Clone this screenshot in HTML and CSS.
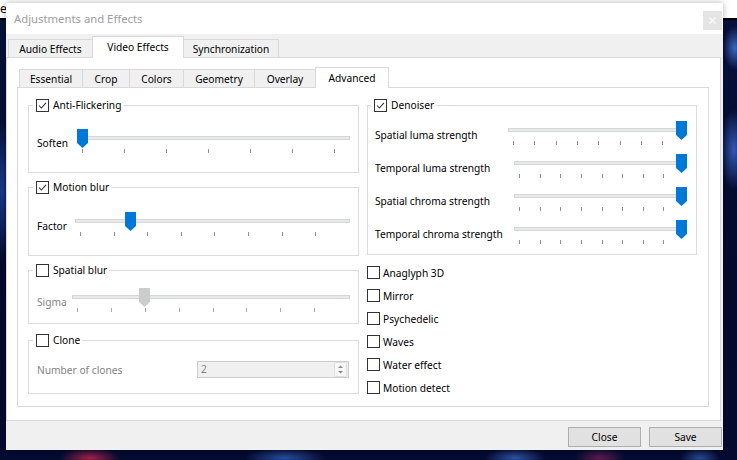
FILE: index.html
```html
<!DOCTYPE html>
<html>
<head>
<meta charset="utf-8">
<title>Adjustments and Effects</title>
<link rel="stylesheet" href="styles.css">
</head>
<body>
<div class="desktop">
  <div class="bg-window"><span class="bg-title">ec</span></div>
  <div class="dialog">
    <div class="titlebar">
      <span class="title">Adjustments and Effects</span>
      <span class="close-x"><svg width="7" height="7" viewBox="0 0 7 7"><path d="M0.5 0.5L6.5 6.5M6.5 0.5L0.5 6.5" stroke="#fafafa" stroke-width="1.2"/></svg></span>
    </div>
    <div class="body">
      <div class="tabbar outer-tabs">
        <div class="tab w-audio">Audio Effects</div>
        <div class="tab w-video selected">Video Effects</div>
        <div class="tab w-sync">Synchronization</div>
      </div>
      <div class="outer-pane">
        <div class="tabbar sub-tabs">
          <div class="subtab w-essential">Essential</div>
          <div class="subtab w-crop">Crop</div>
          <div class="subtab w-colors">Colors</div>
          <div class="subtab w-geometry">Geometry</div>
          <div class="subtab w-overlay">Overlay</div>
          <div class="subtab w-advanced selected">Advanced</div>
        </div>
        <div class="subpane">
          <div class="col left-col">
            <fieldset class="group g-anti">
              <legend><span class="legend-inner"><span class="cb"><svg width="11" height="11" viewBox="0 0 11 11"><path d="M2 5.5L4.3 8L9 2.8" fill="none" stroke="#333" stroke-width="1.1"/></svg></span>Anti-Flickering</span></legend>
              <div class="slider-row">
                <span class="lbl lbl-soften">Soften</span>
                <div class="slider">
                  <div class="groove"></div>
                  <div class="ticks t-anti"><i></i><i></i><i></i><i></i><i></i><i></i><i></i></div>
                  <span class="handle" style="left:0px"><svg width="11" height="19" viewBox="0 0 11 19"><polygon points="0,0 11,0 11,14 5.5,19 0,14"/></svg></span>
                </div>
              </div>
            </fieldset>

            <fieldset class="group g-motion">
              <legend><span class="legend-inner"><span class="cb"><svg width="11" height="11" viewBox="0 0 11 11"><path d="M2 5.5L4.3 8L9 2.8" fill="none" stroke="#333" stroke-width="1.1"/></svg></span>Motion blur</span></legend>
              <div class="slider-row">
                <span class="lbl lbl-factor">Factor</span>
                <div class="slider">
                  <div class="groove"></div>
                  <div class="ticks t-motion"><i></i><i></i><i></i><i></i><i></i><i></i><i></i><i></i></div>
                  <span class="handle" style="left:50px"><svg width="11" height="19" viewBox="0 0 11 19"><polygon points="0,0 11,0 11,14 5.5,19 0,14"/></svg></span>
                </div>
              </div>
            </fieldset>

            <fieldset class="group g-spatial">
              <legend><span class="legend-inner"><span class="cb"></span>Spatial blur</span></legend>
              <div class="slider-row disabled">
                <span class="lbl lbl-sigma">Sigma</span>
                <div class="slider">
                  <div class="groove"></div>
                  <div class="ticks t-spatial"><i></i><i></i><i></i><i></i><i></i><i></i><i></i><i></i></div>
                  <span class="handle" style="left:67px"><svg width="11" height="19" viewBox="0 0 11 19"><polygon points="0,0 11,0 11,14 5.5,19 0,14"/></svg></span>
                </div>
              </div>
            </fieldset>

            <fieldset class="group g-clone">
              <legend><span class="legend-inner"><span class="cb"></span>Clone</span></legend>
              <div class="spin-row">
                <span class="lbl-dis">Number of clones</span>
                <div class="spinbox">
                  <span class="spin-value">2</span>
                  <svg class="spin-arrows" width="13" height="15" viewBox="0 0 13 15"><rect x="0.5" y="0.5" width="12" height="14" rx="1" fill="#f7f7f7" stroke="#dedede"/><polygon points="4,6 9,6 6.5,3.5" fill="#8a8a8a"/><polygon points="4,9 9,9 6.5,11.5" fill="#8a8a8a"/></svg>
                </div>
              </div>
            </fieldset>
          </div>

          <div class="col right-col">
            <fieldset class="group g-denoise">
              <legend><span class="legend-inner"><span class="cb"><svg width="11" height="11" viewBox="0 0 11 11"><path d="M2 5.5L4.3 8L9 2.8" fill="none" stroke="#333" stroke-width="1.1"/></svg></span>Denoiser</span></legend>
              <div class="denoise-grid">
                <span class="lbl">Spatial luma strength</span>
                <div class="slider first">
                  <div class="groove"></div>
                  <div class="ticks t-den1"><i></i><i></i><i></i><i></i><i></i><i></i><i></i><i></i></div>
                  <span class="handle" style="left:168px"><svg width="11" height="19" viewBox="0 0 11 19"><polygon points="0,0 11,0 11,14 5.5,19 0,14"/></svg></span>
                </div>
                <span class="lbl">Temporal luma strength</span>
                <div class="slider">
                  <div class="groove"></div>
                  <div class="ticks t-den"><i></i><i></i><i></i><i></i><i></i><i></i><i></i><i></i></div>
                  <span class="handle" style="left:162px"><svg width="11" height="19" viewBox="0 0 11 19"><polygon points="0,0 11,0 11,14 5.5,19 0,14"/></svg></span>
                </div>
                <span class="lbl">Spatial chroma strength</span>
                <div class="slider">
                  <div class="groove"></div>
                  <div class="ticks t-den"><i></i><i></i><i></i><i></i><i></i><i></i><i></i><i></i></div>
                  <span class="handle" style="left:162px"><svg width="11" height="19" viewBox="0 0 11 19"><polygon points="0,0 11,0 11,14 5.5,19 0,14"/></svg></span>
                </div>
                <span class="lbl">Temporal chroma strength</span>
                <div class="slider">
                  <div class="groove"></div>
                  <div class="ticks t-den"><i></i><i></i><i></i><i></i><i></i><i></i><i></i><i></i></div>
                  <span class="handle" style="left:162px"><svg width="11" height="19" viewBox="0 0 11 19"><polygon points="0,0 11,0 11,14 5.5,19 0,14"/></svg></span>
                </div>
              </div>
            </fieldset>

            <div class="checks">
              <div class="check-row"><span class="cb"></span>Anaglyph 3D</div>
              <div class="check-row"><span class="cb"></span>Mirror</div>
              <div class="check-row"><span class="cb"></span>Psychedelic</div>
              <div class="check-row"><span class="cb"></span>Waves</div>
              <div class="check-row"><span class="cb"></span>Water effect</div>
              <div class="check-row"><span class="cb"></span>Motion detect</div>
            </div>
          </div>
        </div>
      </div>
      <div class="footer">
        <button class="btn">Close</button>
        <button class="btn">Save</button>
      </div>
    </div>
  </div>
</div>
</body>
</html>
```

FILE: styles.css
```css
* { box-sizing: border-box; }

html, body {
  margin: 0;
  padding: 0;
  background: #030826;
}

body {
  font-family: "Noto Sans", "Open Sans", sans-serif;
  font-size: 10.2px;
  color: #000;
}

.desktop {
  position: relative;
  width: 737px;
  height: 460px;
  overflow: hidden;
  background:
    radial-gradient(ellipse 14px 40px at 734px 150px, rgba(70,120,235,.7), transparent),
    radial-gradient(ellipse 12px 22px at 735px 48px, rgba(80,140,245,.7), transparent),
    radial-gradient(ellipse 10px 70px at 2px 190px, rgba(40,90,210,.6), transparent),
    radial-gradient(ellipse 30px 10px at 90px 458px, rgba(210,40,80,.75), transparent),
    radial-gradient(ellipse 40px 10px at 285px 458px, rgba(60,120,225,.6), transparent),
    radial-gradient(ellipse 30px 10px at 515px 458px, rgba(70,130,235,.6), transparent),
    radial-gradient(ellipse 25px 10px at 600px 458px, rgba(160,40,100,.55), transparent),
    radial-gradient(ellipse 20px 10px at 700px 458px, rgba(70,130,235,.5), transparent),
    linear-gradient(#07113d, #040a2c 60%, #050b30);
}

.bg-window {
  height: 20px;
  background: #ffffff;
  border-bottom: 2px solid #000;
}

.bg-title {
  display: block;
  margin-left: 0;
  font-size: 12px;
  line-height: 18px;
  color: #000;
}

.dialog {
  position: absolute;
  left: 6px;
  top: 3px;
  width: 717px;
  height: 447px;
  background: #f0f0f0;
  display: flex;
  flex-direction: column;
  box-shadow: 0 0 6px rgba(0,0,0,.3);
}

.titlebar {
  height: 31px;
  flex: none;
  background: #fff;
  display: flex;
  align-items: flex-start;
}

.title {
  margin: 8px 0 0 8px;
  font-size: 11.3px;
  line-height: 16px;
  color: #9d9d9d;
}

.close-x {
  margin: 8px 1px 0 auto;
  width: 19px;
  height: 19px;
  background: #e5e5e5;
  display: flex;
  align-items: center;
  justify-content: center;
}

.body {
  flex: 1;
  display: flex;
  flex-direction: column;
  padding: 2px 0 0 0;
}

.tabbar {
  display: flex;
  align-items: flex-end;
  flex: none;
}

.outer-tabs {
  height: 21px;
  padding-left: 2px;
}

.tab, .subtab {
  height: 18px;
  border: 1px solid #d9d9d9;
  border-bottom: none;
  background: #f0f0f0;
  display: flex;
  align-items: center;
  justify-content: center;
  line-height: 16px;
  margin-right: -1px;
  white-space: nowrap;
}

.tab.selected {
  height: 22px;
  margin-bottom: -1px;
  background: #fff;
  position: relative;
  z-index: 1;
  padding-bottom: 2px;
}

.w-audio { width: 85px; }
.w-video { width: 92px; }
.w-sync { width: 96px; }

.outer-pane {
  background: #fff;
  border: 1px solid #d9d9d9;
  margin-right: 2px;
  padding: 9px 11px 13px 10px;
}

.sub-tabs {
  height: 20px;
  padding-left: 2px;
}

.subtab.selected {
  height: 21px;
  margin-bottom: -1px;
  background: #fff;
  position: relative;
  z-index: 1;
  padding-bottom: 1px;
}

.w-essential { width: 64px; }
.w-crop { width: 48px; }
.w-colors { width: 55px; }
.w-geometry { width: 72px; }
.w-overlay { width: 62px; }
.w-advanced { width: 74px; }

.subpane {
  height: 320px;
  border: 1px solid #d9d9d9;
  padding: 9px 11px 0 10px;
  display: flex;
  gap: 8px;
}

.col {
  display: flex;
  flex-direction: column;
}

.left-col { width: 331px; }
.right-col { width: 330px; }

.group {
  margin: 0;
  border: 1px solid #dcdcdc;
  padding: 0 8px 15px 8px;
  min-width: 0;
}

.group legend {
  margin-left: -4px;
  padding: 0 2px 0 3px;
  height: 16px;
}

.legend-inner {
  display: flex;
  align-items: center;
  gap: 4px;
  height: 16px;
  line-height: 16px;
}

.cb {
  flex: none;
  width: 13px;
  height: 13px;
  border: 1px solid #333;
  background: #fff;
  display: flex;
  align-items: center;
  justify-content: center;
}

.g-anti { padding-top: 16px; }
.g-motion { margin-top: 6px; padding-top: 17px; }
.g-spatial { margin-top: 6px; padding-top: 10px; padding-bottom: 7px; }
.g-clone { margin-top: 8px; padding-top: 13px; padding-right: 9px; }

.slider-row {
  display: flex;
  align-items: center;
}

.lbl { line-height: 16px; white-space: nowrap; }
.lbl-soften { width: 40px; }
.lbl-factor { width: 38px; }
.lbl-sigma { width: 35px; }

.slider-row.disabled .lbl { color: #838383; }

.slider {
  position: relative;
  flex: 1;
  height: 28px;
}

.groove {
  margin-top: 7px;
  height: 4px;
  background: #e7eaea;
  border: 1px solid #d6d6d6;
}

.ticks {
  display: flex;
  margin-top: 9px;
  padding-left: 5px;
}

.ticks i {
  display: block;
  width: 1px;
  height: 4px;
  background: #8f8f8f;
}

.t-anti { gap: 41px; }
.t-motion { gap: 32.6px; }
.t-spatial { gap: 32.9px; }
.t-den1 { gap: 20.34px; }
.t-den { gap: 19.63px; }

.disabled .ticks i { background: #a8a8a8; }

.handle {
  position: absolute;
  top: 0;
  width: 11px;
  height: 19px;
  fill: #0078d7;
}

.handle svg { display: block; }

.disabled .handle { fill: #cccccc; }

.spin-row {
  display: flex;
  align-items: center;
}

.lbl-dis {
  flex: 1;
  color: #838383;
  line-height: 16px;
}

.spinbox {
  width: 152px;
  height: 17px;
  border: 1px solid #cccccc;
  background: #f0f0f0;
  display: flex;
  align-items: center;
  padding: 0 1px 0 3px;
}

.spin-value {
  flex: 1;
  color: #838383;
  line-height: 15px;
}

.spin-arrows { display: block; }

.g-denoise {
  padding: 8px 10px 6px 7px;
}

.denoise-grid {
  display: grid;
  grid-template-columns: 139px 1fr;
  row-gap: 5px;
  align-items: center;
}

.slider.first { margin-left: -6px; }

.checks {
  margin-top: 6px;
  display: flex;
  flex-direction: column;
}

.check-row {
  height: 23px;
  display: flex;
  align-items: center;
  gap: 3px;
  line-height: 16px;
}

.footer {
  flex: 1;
  display: flex;
  justify-content: flex-end;
  align-items: flex-start;
  gap: 8px;
  padding: 6px 1px 0 0;
}

.btn {
  width: 73px;
  height: 20px;
  border: 1px solid #adadad;
  background: #e1e1e1;
  font-family: "Noto Sans", "Open Sans", sans-serif;
  font-size: 10.2px;
  color: #000;
  padding: 0;
  line-height: 16px;
}
```
